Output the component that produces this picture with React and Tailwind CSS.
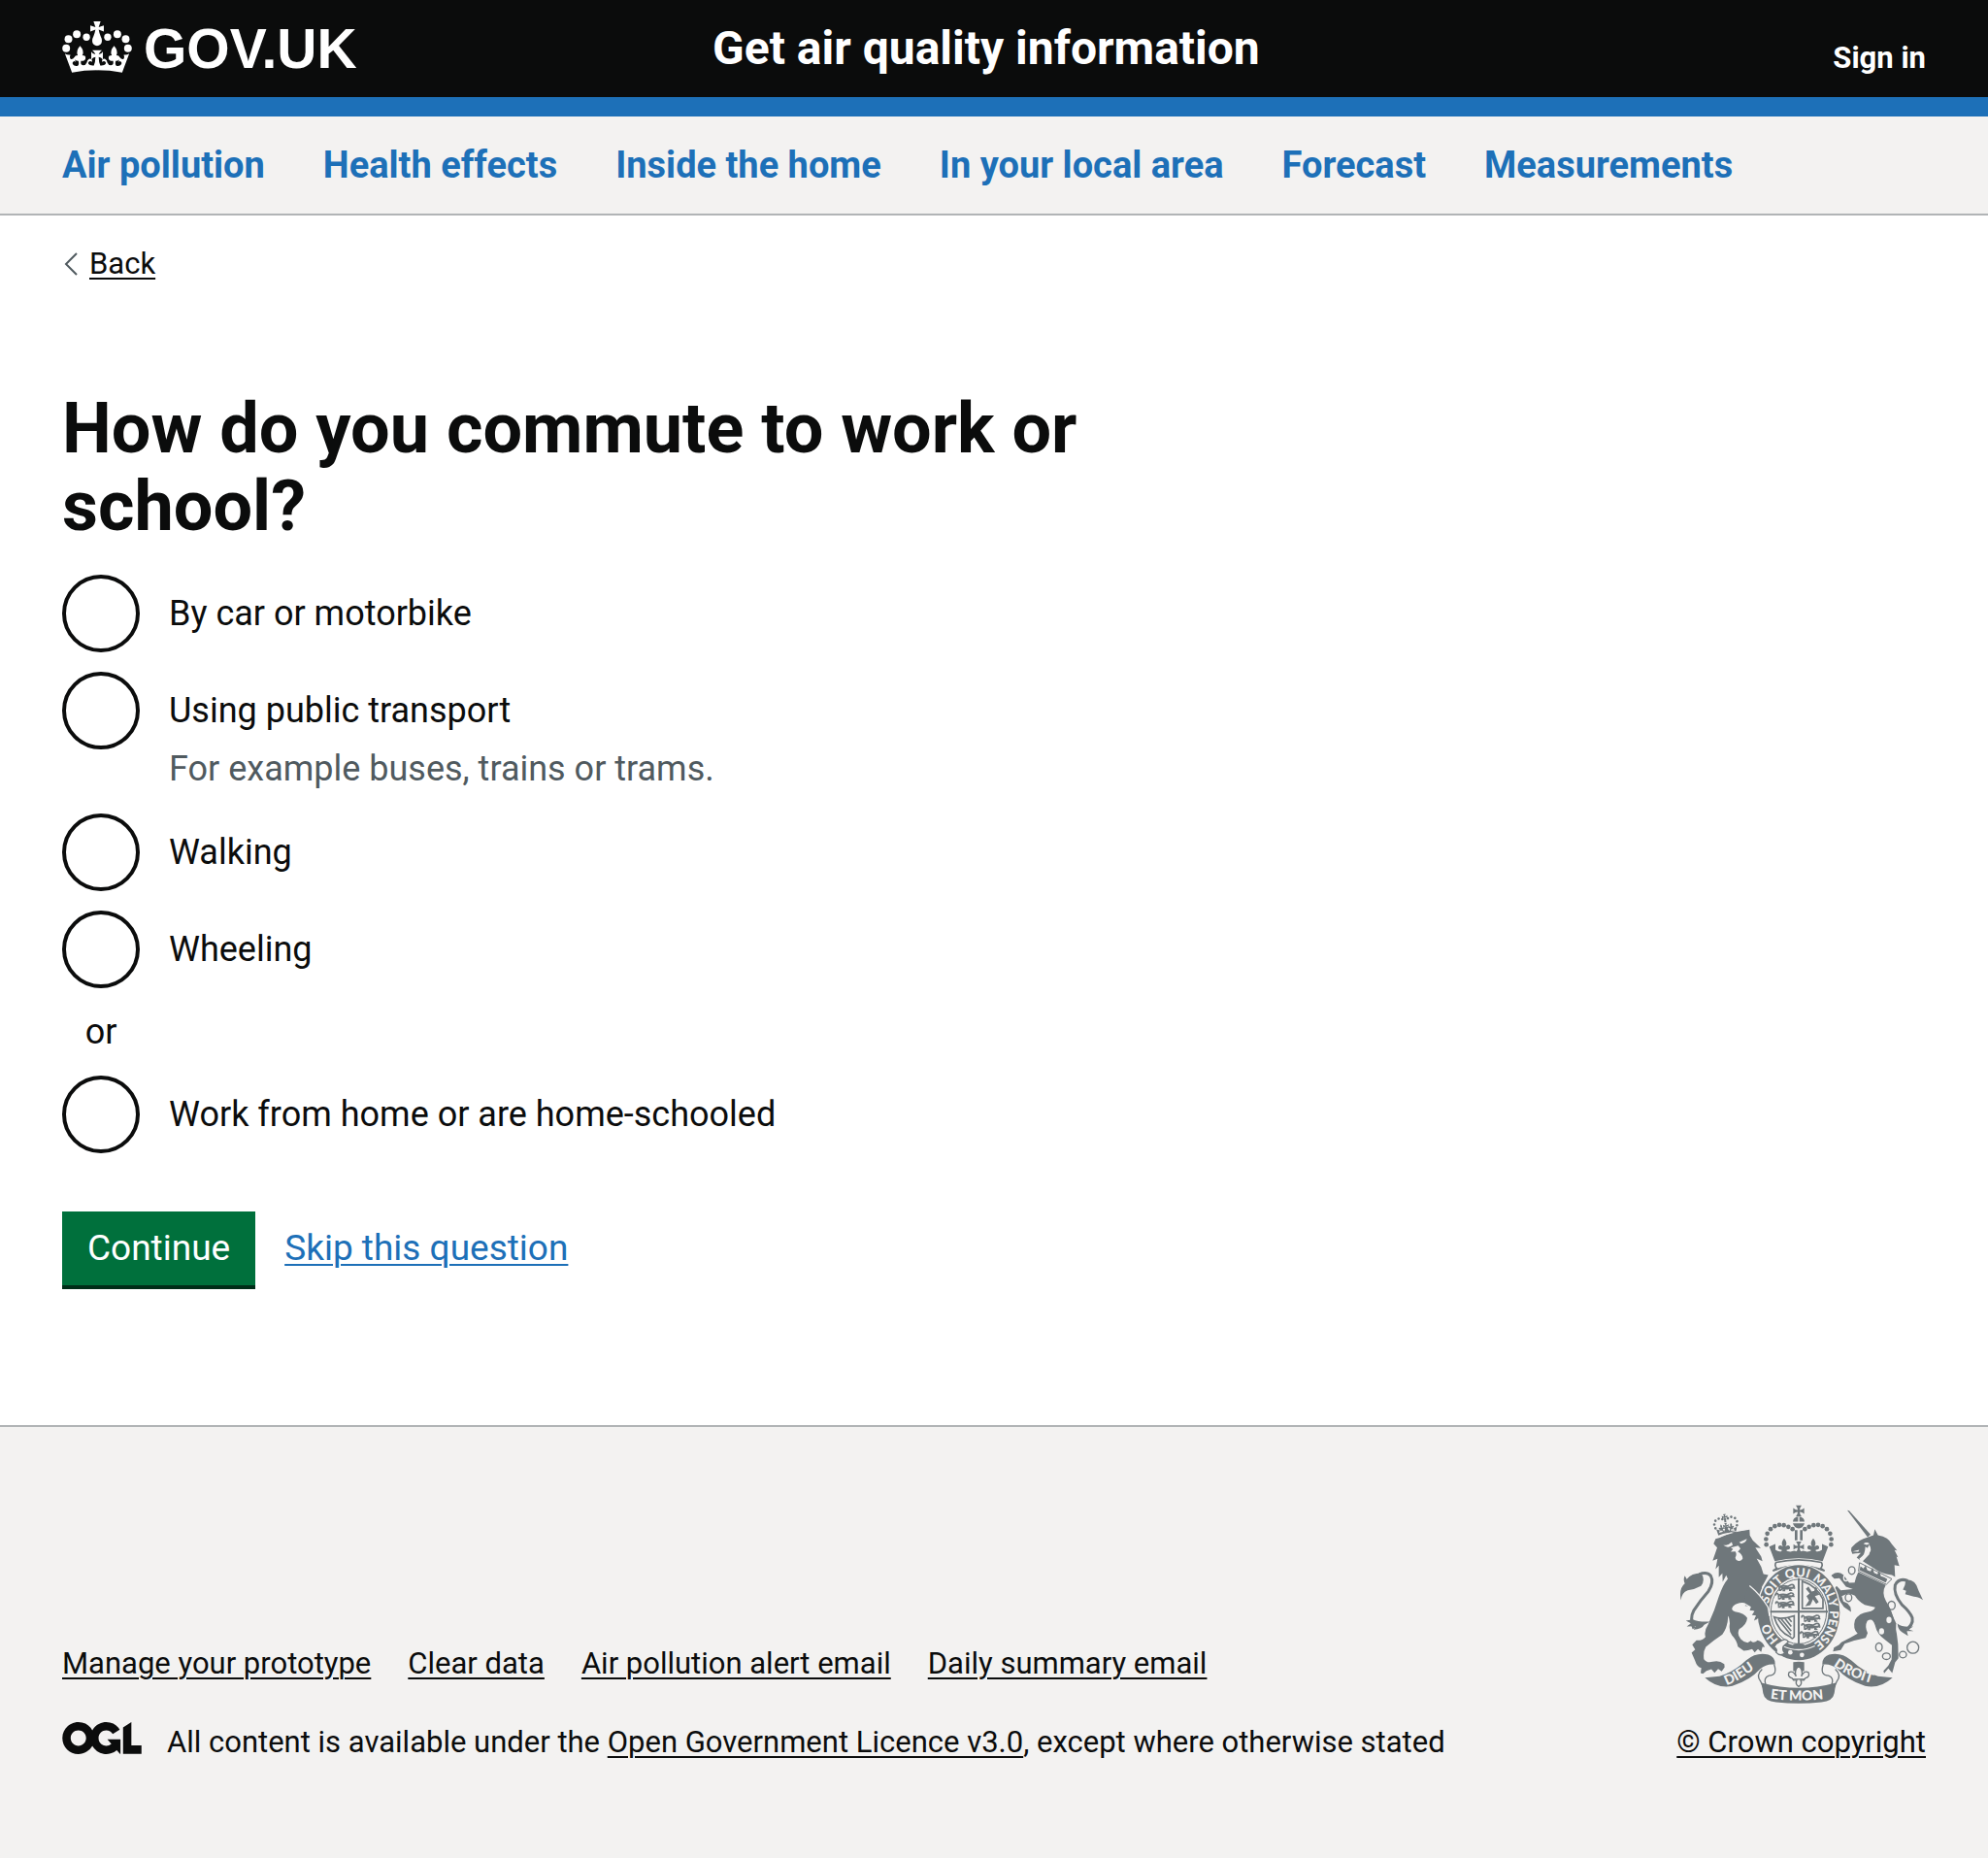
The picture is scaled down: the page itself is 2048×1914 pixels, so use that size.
import React from "react";

const navItems = ["Air pollution", "Health effects", "Inside the home", "In your local area", "Forecast", "Measurements"];
const footerLinks = ["Manage your prototype", "Clear data", "Air pollution alert email", "Daily summary email"];
const options = [
  { id: "car", label: "By car or motorbike" },
  { id: "public", label: "Using public transport", hint: "For example buses, trains or trams." },
  { id: "walking", label: "Walking" },
  { id: "wheeling", label: "Wheeling" },
  { id: "home", label: "Work from home or are home-schooled", divider: true },
];

const underlined = "underline decoration-2 underline-offset-4";

function CrownHalf() {
  return (
    <g>
      <circle cx="24" cy="102" r="12" />
      <circle cx="31" cy="73" r="12" />
      <circle cx="57" cy="58" r="12" />
      <circle cx="87" cy="67" r="11" />
      <path d="M20 118L42 177Q80 170 121 170V156Q108 157 98 154Q90 150 94 144Q98 139 105 144Q104 132 95 135Q89 138 88 146Q84 156 74 154Q68 152 70 141Q82 142 84 134Q86 124 74 124Q82 110 67 94Q53 110 60 124Q49 124 50 134Q53 142 62 141Q65 152 60 156Q50 159 44 151Q42 145 48 142Q51 142 53 145L50 129Q45 137 38 136Q33 130 37 122Q28 124 20 118Z" />
    </g>
  );
}

function Crown() {
  return (
    <svg viewBox="12 18 216 160" className="mb-1 h-[53px] w-[72px] fill-white" aria-hidden="true">
      <CrownHalf />
      <g transform="matrix(-1 0 0 1 240 0)"><CrownHalf /></g>
      <path d="M109 18H131L125 36L141 31V50L125 44Q127 55 131 64Q135 71 135 79A15 15 0 0 1 105 79Q105 71 109 64Q113 55 115 44L99 50V31L115 36Z" />
      <path d="M105 108H135Q127 115 125 121Q133 120 138 112V137Q133 130 125 129Q125 145 131 158H109Q115 145 115 129Q107 130 102 137V112Q107 120 115 121Q113 115 105 108Z" />
    </svg>
  );
}

function OglLogo() {
  return (
    <svg viewBox="0 0 483.2 195.7" className="mb-2 h-[33px] w-[82px] shrink-0 fill-[#0b0c0c]" aria-hidden="true">
      <path d="M421.5 142.8V.1l-50.7 32.3v161.1h112.4v-50.7zm-122.3-9.6A47.12 47.12 0 0 1 221 97.8c0-26 21.1-47.1 47.1-47.1 16.7 0 31.4 8.7 39.7 21.8l42.7-27.2A97.63 97.63 0 0 0 268.1 0c-36.5 0-68.3 20.1-85.1 49.7A98 98 0 0 0 97.8 0C43.9 0 0 43.9 0 97.8s43.9 97.8 97.8 97.8c36.5 0 68.3-20.1 85.1-49.7a97.76 97.76 0 0 0 149.6 25.4l19.4 22.2h3v-87.8h-80l24.3 27.5zM97.8 145c-26 0-47.1-21.1-47.1-47.1s21.1-47.1 47.1-47.1 47.1 21.1 47.1 47.1S123.8 145 97.8 145" />
    </svg>
  );
}

const crownDots = [[350, 181], [349, 164], [353, 147], [363, 133], [376, 124], [390, 120], [404, 121], [418, 126], [431, 133]];

function Fleur({ x, y, s = 1 }) {
  return (
    <path
      transform={`translate(${x} ${y}) scale(${s})`}
      d="M0-22Q12-8 4 3Q14-4 18 4Q20 13 8 13Q6 19 14 22H-14Q-6 19-8 13Q-20 13-18 4Q-14-4-4 3Q-12-8 0-22Z"
    />
  );
}

function Pattee({ x, y, s = 1 }) {
  return (
    <path
      transform={`translate(${x} ${y}) scale(${s})`}
      d="M-9-17H9Q3-10 3-3Q10-3 17-9V9Q10 3 3 3Q3 10 9 17H-9Q-3 10-3 3Q-10 3-17 9V-9Q-10-3-3-3Q-3-10-9-17Z"
    />
  );
}

function SmallLion({ x, y }) {
  return (
    <path
      transform={`translate(${x} ${y})`}
      d="M-30-2Q-32-9-26-8L-22-4M-22 5V-3Q-10-8 4-4L14-9Q22-11 24-4L19 1L10 2Q0 5-12 3L-18 8H-24M-6 3V9H-12M8 1L14 8H8M18-1L27 2M-18 0H18"
      fill="none"
      strokeWidth="5"
    />
  );
}

function CrestArms() {
  return (
    <svg
      viewBox="84 58 750 614"
      className="h-[205px] w-[250px] fill-[#6f777b] stroke-[#6f777b]"
      strokeWidth="0"
      role="img"
      aria-label="Royal coat of arms"
    >
      <defs>
        <path id="garter" d="M450 500A96 110 0 0 1 354 390A96 110 0 0 1 450 280A96 110 0 0 1 546 390A96 110 0 0 1 450 500" />
        <path id="dieu" d="M227 615Q264 604 332 551" />
        <path id="mon" d="M362 657Q450 669 546 655" />
        <path id="droit" d="M557 555Q608 594 700 616" />
      </defs>

      {/* Lion */}
      <path d="M187 178L193 163L204 160Q250 139 298 135L299 153L308 168L333 192L316 190L334 218L338 232L320 224Q336 248 341 272L356 275L345 296L336 312L334 342L352 372L358 402L352 414L342 404L338 418L330 403L318 414L322 398L308 400L313 384L297 386L302 372L284 370L288 362Q262 357 247 372Q238 384 253 388Q284 393 291 408Q289 430 266 442Q258 458 271 473Q280 483 292 484L302 478Q310 488 323 477Q340 482 345 498L338 497L334 513L324 504L314 514L306 504Q294 509 280 509L262 496Q258 476 244 462Q233 448 237 424Q234 400 232 402Q231 436 214 459Q190 475 163 497Q154 512 157 535Q166 548 184 543Q203 537 220 550L221 560L212 573L201 565L190 577L180 566L165 571L154 580L147 578L149 562Q136 560 129 538L119 515L130 505L121 490L134 477Q154 478 162 466Q156 449 170 428Q190 386 203 342Q216 304 231 287L226 276L215 296L214 270L203 282L203 246L193 257L199 225L184 231L198 190Z" />
      <g className="fill-[#f3f2f1]">
        <path d="M217 183Q232 184 243 173L246 183Q232 194 217 183ZM266 174L290 163Q287 175 272 178ZM240 190L263 184L270 193L262 203Q276 210 277 224A12 12 0 0 1 254 221Q260 210 254 202L240 203L247 195Z" />
      </g>
      <path d="M126 440Q112 410 126 384Q145 354 171 325Q189 298 178 277Q166 264 142 273" fill="none" strokeWidth="9" />
      <path d="M148 269Q163 289 148 309Q129 320 107 322Q88 329 86 353Q79 316 98 301Q92 288 98 277L104 288Q119 269 148 269ZM123 412Q139 421 176 419L158 429Q150 443 125 444L131 433L104 434L117 424L101 416Z" />
      <g transform="rotate(-8 226 130)">
        {[[193, 126], [191, 114], [196, 103], [207, 98], [218, 101], [235, 101], [246, 98], [257, 103], [262, 114], [260, 126]].map(([x, y]) => (
          <circle key={`${x}-${y}`} cx={x} cy={y} r="4" />
        ))}
        <path d="M195 130L206 134L202 141L214 140L212 126L218 140L222 132L217 129L226 125L235 129L230 132L235 140L241 126L239 140L251 141L248 134L259 130L254 149Q226 141 199 149Z" />
        <Fleur x={211} y={126} s={0.45} />
        <Fleur x={242} y={126} s={0.45} />
        <Pattee x={226} y={123} s={0.5} />
        <Pattee x={226} y={95} s={0.5} />
        <path d="M223 102H229V112H223Z" />
      </g>
      <path d="M204 158Q245 137 292 133" fill="none" className="stroke-[#f3f2f1]" strokeWidth="2" />

      {/* Unicorn */}
      <path d="M600 75L606 76L672 150L663 158Z" />
      <path d="M662 159L681 152L685 133L695 152Q728 158 738 180L754 199L746 198L757 220L752 218L761 247L746 244L748 281L738 275Q702 270 681 253L648 232L668 211Q672 195 656 187Q655 213 640 229L629 221L642 207L625 208L616 210L612 199L613 190Q636 165 662 159Z" />
      <g className="fill-[#f3f2f1]">
        <path d="M650 178Q660 171 669 178L660 182ZM668 181Q680 200 663 212L642 232L637 225Q656 210 660 197ZM616 202L637 197L634 203Z" />
      </g>
      <path d="M638 237L738 287L721 304L635 263Z" fill="none" strokeWidth="3" />
      <path d="M641 248L650 255L657 245L662 260L672 264L678 252L683 268L693 273L699 261L704 279L714 282L724 288L719 298L638 260Z" />
      <path d="M634 266L719 306Q705 330 720 356Q741 388 746 424Q754 454 757 489L758 532L748 545L744 560L739 578L727 564L714 579L712 571L727 555L737 536L738 492L718 476Q692 458 686 430Q678 404 662 417Q653 434 663 454L657 469Q618 477 592 487L580 507L556 511L559 499L574 491L582 483Q616 466 632 456Q616 441 624 414Q637 392 664 389Q685 385 686 375L654 367Q629 354 621 333Q618 298 634 266Z" />
      <path d="M552 275Q570 261 588 274L606 299L627 298L622 320L596 311L576 285L560 286L551 277ZM556 322L567 309L580 322L624 318L628 340L604 331L583 340L588 357L601 363L610 374L612 389L590 374L576 354L563 347L573 341Z" />
      <path d="M744 472Q721 412 727 372L751 424L750 462Z" />
      <path d="M774 450Q806 431 801 407Q793 388 769 367Q742 333 748 306Q760 282 787 293" fill="none" strokeWidth="9" />
      <path d="M781 289Q812 287 820 322L834 352Q817 342 806 342L779 334L782 324L772 320Q780 307 781 289ZM755 425Q770 438 804 434L790 443L805 448L784 448L788 463L770 452Q757 445 755 425Z" />
      <g fill="none" strokeWidth="4">
        <ellipse cx="614" cy="261" rx="10" ry="12" />
        <ellipse cx="596" cy="284" rx="7" ry="9" className="stroke-[#f3f2f1]" />
        <ellipse cx="604" cy="345" rx="10" ry="12" />
        <ellipse cx="737" cy="369" rx="11" ry="13" />
        <ellipse cx="698" cy="498" rx="10" ry="13" />
        <ellipse cx="721" cy="526" rx="12" ry="10" />
        <ellipse cx="772" cy="521" rx="11" ry="10" />
        <circle cx="803" cy="499" r="18" />
      </g>
      <g className="fill-[#f3f2f1]">
        <ellipse cx="729" cy="414" rx="8" ry="10" />
        <ellipse cx="706" cy="449" rx="8" ry="10" />
      </g>

      {/* Crown over the shield */}
      {crownDots.map(([x, y]) => (
        <g key={`${x}-${y}`}>
          <circle cx={x} cy={y} r="7" />
          <circle cx={900 - x} cy={y} r="7" />
        </g>
      ))}
      <Pattee x={450} y={77} />
      <path d="M432 110A18 16 0 0 1 448 95V110ZM452 95A18 16 0 0 1 468 110H452ZM432 115H468Q464 129 450 131Q436 129 432 115ZM438 136H446V168H438ZM454 136H462V168H454Z" />
      <Pattee x={450} y={188} s={0.95} />
      <Fleur x={405} y={184} />
      <Fleur x={495} y={184} />
      <path d="M359 187L378 179V197Q386 204 396 202L405 199L424 203L436 200L450 204L464 200L476 203L495 199L504 202Q514 204 522 197V179L541 187L524 232Q450 214 376 232Z" />
      <path d="M380 236Q450 220 520 236Q526 245 518 254L530 262Q450 230 370 262L382 254Q374 245 380 236Z" className="fill-[#f3f2f1]" strokeWidth="5" />

      {/* Garter and shield */}
      <ellipse cx="450" cy="391" rx="131" ry="150" className="fill-[#f3f2f1]" />
      <ellipse cx="450" cy="391" rx="127" ry="147" />
      <ellipse cx="450" cy="388" rx="92" ry="106" className="fill-[#f3f2f1]" />
      <ellipse cx="450" cy="388" rx="86" ry="100" fill="none" strokeWidth="3" />
      <path d="M450 285V492M362 388H540" fill="none" strokeWidth="6" />
      <SmallLion x={412} y={314} />
      <SmallLion x={410} y={340} />
      <SmallLion x={410} y={366} />
      <SmallLion x={490} y={409} />
      <SmallLion x={490} y={434} />
      <SmallLion x={486} y={459} />
      <path d="M461 294Q505 308 525 350V378H461Z" fill="none" strokeWidth="5" />
      <path d="M470 372L482 354L474 340L484 332L472 318L480 310L490 326L504 322L514 336L500 340L512 358L504 364L494 350L486 368ZM502 312L508 318L496 330Z" />
      <path d="M374 405Q394 414 436 401V466Q430 476 424 466Q388 452 374 405ZM386 411L426 460M396 411L427 448M408 410L427 434M418 408L428 420" fill="none" strokeWidth="5" />
      <path d="M424 496Q450 474 476 496V510H424Z" />
      <path d="M400 494Q450 518 500 494" fill="none" className="stroke-[#f3f2f1]" strokeWidth="4" />
      <g className="fill-[#f3f2f1]">
        <circle cx="424" cy="514" r="7" />
        <circle cx="460" cy="522" r="7" />
      </g>
      <path d="M390 482Q410 466 418 482Q408 490 402 496Q398 510 408 516Q392 528 380 514Q386 504 374 498Q378 486 390 482Z" className="fill-[#f3f2f1]" strokeWidth="4" />
      <g className="fill-[#f3f2f1] font-['Lato'] text-[38px] font-black">
        <text><textPath href="#garter" startOffset="68">HO</textPath></text>
        <text><textPath href="#garter" startOffset="188">SOIT</textPath></text>
        <text><textPath href="#garter" startOffset="284">QUI</textPath></text>
        <text><textPath href="#garter" startOffset="366">MAL</textPath></text>
        <text><textPath href="#garter" startOffset="446">Y</textPath></text>
        <text><textPath href="#garter" startOffset="480">PENSE</textPath></text>
      </g>

      {/* Lion's paw resting on the garter */}
      <path d="M298 308Q332 336 353 368L360 402L354 417L344 407L337 421L328 407L312 416L317 401L302 400L311 386L297 384L301 374L280 362L286 330Z" />
      <path d="M298 308Q332 336 355 374L360 402M280 362L300 374L296 386L310 388L302 400L317 402" fill="none" className="stroke-[#f3f2f1]" strokeWidth="4" />

      {/* Ribbon and pendant */}
      <path d="M160 592L205 588Q250 574 288 538Q320 512 356 521Q378 528 377 552Q352 548 330 566Q300 600 245 618Q200 628 160 592ZM740 592L695 588Q650 574 612 538Q580 512 544 521Q522 528 523 552Q548 548 570 566Q600 600 655 618Q700 628 740 592Z" />
      <path d="M335 608Q450 640 565 608L560 640Q556 664 520 668Q450 676 380 668Q344 664 340 640Z" />
      <path d="M337 566Q316 585 333 605L340 622M374 552Q386 584 358 586Q340 592 348 614M563 566Q584 585 567 605L560 622M526 552Q514 584 542 586Q560 592 552 614" fill="none" strokeWidth="4" />
      <path d="M433 544Q450 541 467 544V572H433Z" />
      <path d="M450 556Q466 570 458 588Q468 568 480 576Q486 590 470 594L466 600L456 600Q462 612 450 620Q438 612 444 600L434 600L430 594Q414 590 420 576Q432 568 442 588Q434 570 450 556Z" className="fill-[#f3f2f1]" strokeWidth="4" />
      <path d="M432 597H468" strokeWidth="4" />
      <g className="fill-[#f3f2f1] font-['Lato'] text-[42px] font-black">
        <text><textPath href="#dieu">DIEU</textPath></text>
        <text><textPath href="#mon">ET MON</textPath></text>
        <text><textPath href="#droit">DROIT</textPath></text>
      </g>
    </svg>
  );
}

function Option({ option }) {
  return (
    <div className="grid grid-cols-[80px_1fr] items-center gap-x-[30px]">
      <input
        type="radio"
        name="commute"
        id={option.id}
        aria-describedby={option.hint ? `${option.id}-hint` : undefined}
        className="size-20 appearance-none rounded-full border-4 border-[#0b0c0c] bg-white checked:bg-[#0b0c0c] checked:bg-clip-content checked:p-4"
      />
      <label htmlFor={option.id}>{option.label}</label>
      {option.hint && (
        <p id={`${option.id}-hint`} className="col-start-2 pb-[6px] leading-10 text-[#505a5f]">{option.hint}</p>
      )}
    </div>
  );
}

export default function App() {
  return (
    <div className="flex min-h-screen flex-col bg-[#f3f2f1] font-['Roboto',sans-serif] text-[31px] leading-10 text-[#0b0c0c]">
      <header className="border-b-20 border-[#1d70b8] bg-[#0b0c0c] px-16 text-white">
        <div className="grid h-25 grid-cols-3 items-center">
          <a href="#home" className="flex items-center gap-3" aria-label="GOV.UK">
            <Crown />
            <span className="font-['Liberation_Sans',sans-serif] text-[57px] leading-none font-bold">GOV.UK</span>
          </a>
          <a href="#service" className="pl-[30px] text-5xl font-bold whitespace-nowrap">Get air quality information</a>
          <a href="#sign-in" className="justify-self-end pt-5 font-bold">Sign in</a>
        </div>
      </header>

      <nav className="border-b-2 border-[#b1b4b6] px-16">
        <ul className="flex h-25 items-center gap-[60px] text-[38px] font-bold text-[#1d70b8]">
          {navItems.map((item) => (
            <li key={item}><a href="#section">{item}</a></li>
          ))}
        </ul>
      </nav>

      <main className="border-b-2 border-[#b1b4b6] bg-white px-16 pt-[30px] pb-36">
        <a href="#back" className="inline-flex items-center gap-3">
          <svg viewBox="0 0 16 24" className="h-6 w-4 fill-none stroke-[#505a5f] stroke-2" aria-hidden="true">
            <path d="M15 1L4 12L15 23" />
          </svg>
          <span className={underlined}>Back</span>
        </a>

        <form className="pt-27 text-4xl leading-[50px]">
          <fieldset className="w-2/3">
            <legend className="max-w-[1100px]">
              <h1 className="text-7xl leading-20 font-bold">How do you commute to work or school?</h1>
            </legend>
            <div className="flex flex-col gap-5 pt-[30px]">
              {options.map((option) => (
                <React.Fragment key={option.id}>
                  {option.divider && <p className="w-20 text-center">or</p>}
                  <Option option={option} />
                </React.Fragment>
              ))}
            </div>
          </fieldset>
          <div className="flex items-center gap-[30px] pt-15 text-[37px]">
            <button type="button" className="h-19 bg-[#00703c] px-[26px] text-white shadow-[0_4px_0_#002d18]">Continue</button>
            <a href="#skip" className={`text-[#1d70b8] ${underlined}`}>Skip this question</a>
          </div>
        </form>
      </main>

      <footer className="flex items-end justify-between px-16 pt-20">
        <div className="flex flex-col gap-10">
          <ul className="flex gap-[38px]">
            {footerLinks.map((item) => (
              <li key={item}><a href="#footer" className={underlined}>{item}</a></li>
            ))}
          </ul>
          <div className="flex items-center gap-[26px]">
            <OglLogo />
            <p>
              All content is available under the <a href="#licence" className={underlined}>Open Government Licence v3.0</a>, except where otherwise stated
            </p>
          </div>
        </div>
        <a href="#copyright" className="flex flex-col items-center gap-5">
          <CrestArms />
          <span className={underlined}>© Crown copyright</span>
        </a>
      </footer>
    </div>
  );
}
